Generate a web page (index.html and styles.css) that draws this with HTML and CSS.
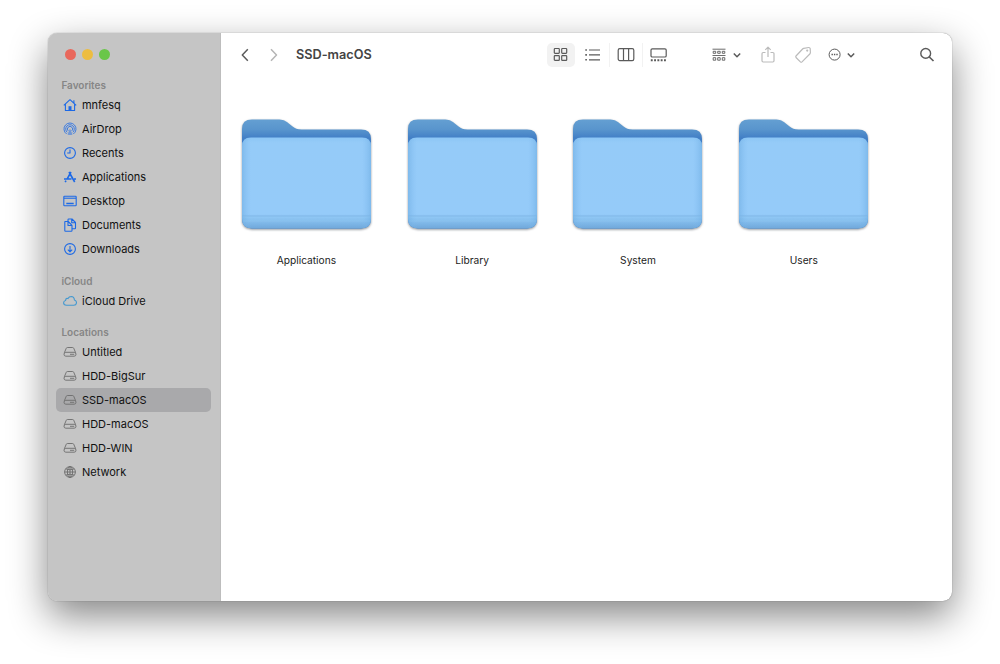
FILE: index.html
```html
<!DOCTYPE html>
<html lang="en">

<head>
  <meta charset="utf-8" />
  <title>SSD-macOS</title>
  <link rel="stylesheet" href="styles.css">
</head>

<body>
  <svg class="defs" width="0" height="0">
    <defs>
      <linearGradient id="folderBack" x1="0" y1="0" x2="0" y2="1">
        <stop offset="0" stop-color="#649fd2" />
        <stop offset="0.09" stop-color="#5995cd" />
        <stop offset="0.17" stop-color="#427fc6" />
        <stop offset="1" stop-color="#427fc6" />
      </linearGradient>
      <linearGradient id="folderFront" x1="0" y1="0" x2="0" y2="1">
        <stop offset="0" stop-color="#8cc6f5" />
        <stop offset="0.06" stop-color="#95cbf8" />
        <stop offset="0.84" stop-color="#95cbf9" />
        <stop offset="0.87" stop-color="#8fc6f4" />
        <stop offset="0.91" stop-color="#87c0ee" />
        <stop offset="0.95" stop-color="#7cb5e6" />
        <stop offset="1" stop-color="#70a8da" />
      </linearGradient>
      <linearGradient id="folderSides" x1="0" y1="0" x2="1" y2="0">
        <stop offset="0" stop-color="#68a8de" stop-opacity="0.5" />
        <stop offset="0.07" stop-color="#7fbaf0" stop-opacity="0" />
        <stop offset="0.93" stop-color="#7fbaf0" stop-opacity="0" />
        <stop offset="1" stop-color="#68a8de" stop-opacity="0.5" />
      </linearGradient>
    </defs>
    <symbol id="folder" viewBox="0 0 130 111" preserveAspectRatio="none">
      <path fill="url(#folderBack)" d="M0 10Q0 .5 10 .5H36C41 .5 43.500 1.500 46.500 4L51 7.500C53.500 9.600 55.500 10.500 60 10.500H120Q130 10.500 130 20V100Q130 110 120 110H10Q0 110 0 100Z" />
      <path fill="url(#folderFront)" d="M0 27.500Q0 18.500 9 18.500H121Q130 18.500 130 27.500V100Q130 110 120 110H10Q0 110 0 100Z" />
      <path fill="url(#folderSides)" d="M0 27.500Q0 18.500 9 18.500H121Q130 18.500 130 27.500V100Q130 110 120 110H10Q0 110 0 100Z" />
      <path fill="none" stroke="#79b2e2" stroke-width=".8" d="M.5 97.500H129.500" />
      <path fill="none" stroke="#a0d1f8" stroke-width=".5" opacity=".5" d="M1 98.300H129M1 102.500H129" />
    </symbol>
    <symbol id="drive" viewBox="0 0 14 14">
      <path d="M1.300 7.800L3.300 3.200Q3.600 2.500 4.400 2.500H9.600Q10.400 2.500 10.700 3.200L12.700 7.800M2.800 7.300H11.200Q13 7.500 13 9.200Q13 11.200 11.200 11.200H2.800Q1 11.200 1 9.200Q1 7.500 2.800 7.300ZM7 9.300H11.200" />
    </symbol>
    <symbol id="down" viewBox="0 0 8 8">
      <path d="M.8 2.500L4 5.700L7.200 2.500" />
    </symbol>
  </svg>

  <div class="window">
    <aside class="sidebar">
      <div class="lights">
        <span class="light red"></span>
        <span class="light yellow"></span>
        <span class="light green"></span>
      </div>

      <h4>Favorites</h4>
      <ul>
        <li>
          <svg class="icon" viewBox="0 0 14 14"><path d="M.8 7.300L7 1.700L13.200 7.300M2.400 6.200V12.500H11.600V6.200M10.900 5V2.300" /><path fill="currentColor" stroke="none" d="M5.500 8.200H8.500V12.500H5.500Z" /></svg>
          mnfesq
        </li>
        <li>
          <svg class="icon thin" viewBox="0 0 14 14"><path d="M3.700 12A6 6 0 1 1 10.300 12M4.200 10.300A4.300 4.300 0 1 1 9.800 10.300M5.200 8.900A2.600 2.600 0 1 1 8.800 8.900" /><path fill="currentColor" stroke="none" d="M7 6.500L9.500 12.500Q7 13.600 4.500 12.500Z" opacity=".5" /></svg>
          AirDrop
        </li>
        <li>
          <svg class="icon" viewBox="0 0 14 14"><circle cx="7" cy="7" r="5.400" /><path d="M7 3.500V7H4.200" /></svg>
          Recents
        </li>
        <li>
          <svg class="icon" viewBox="0 0 14 14"><path stroke-width="1.600" d="M6 2L11.700 12M8 2L4.200 8.800M3 10.700L2.200 12.200M1 9H8.500M11 9H13" /></svg>
          Applications
        </li>
        <li>
          <svg class="icon" viewBox="0 0 14 14"><rect x=".8" y="2.200" width="12.400" height="9.600" rx=".8" /><path d="M1 4.200H13" /><path stroke-width="1.500" d="M3.300 9.500H10.700" /></svg>
          Desktop
        </li>
        <li>
          <svg class="icon" viewBox="0 0 14 14"><path d="M5 3V1.700Q5 1 5.700 1H9L12.500 4.500V10Q12.500 10.700 11.800 10.700H9.300M8.700 1V4.700H12.500M2 3.500H5.200L9 7.300V12.500Q9 13.200 8.300 13.200H2.500Q1.800 13.200 1.800 12.500V4Q1.800 3.500 2 3.500ZM5 3.500V7.500H9" /></svg>
          Documents
        </li>
        <li>
          <svg class="icon" viewBox="0 0 14 14"><circle cx="7" cy="7" r="5.400" /><path d="M7 4V9.700M4.800 7.700L7 9.900L9.200 7.700" /></svg>
          Downloads
        </li>
      </ul>

      <h4>iCloud</h4>
      <ul>
        <li>
          <svg class="icon cloud" viewBox="0 0 14 14"><path d="M3.500 11.300Q.6 11.200 .6 8.800Q.7 6.900 2.600 6.500Q2.500 4.700 4 4.400Q4.600 4.300 5 4.600Q6 2.500 8.200 2.500Q11.200 2.700 11.400 6Q13.500 6.600 13.500 8.700Q13.300 11.200 10.700 11.300Z" /></svg>
          iCloud Drive
        </li>
      </ul>

      <h4>Locations</h4>
      <ul class="locations">
        <li><svg class="icon"><use href="#drive" /></svg>Untitled</li>
        <li><svg class="icon"><use href="#drive" /></svg>HDD-BigSur</li>
        <li class="selected"><svg class="icon"><use href="#drive" /></svg>SSD-macOS</li>
        <li><svg class="icon"><use href="#drive" /></svg>HDD-macOS</li>
        <li><svg class="icon"><use href="#drive" /></svg>HDD-WIN</li>
        <li>
          <svg class="icon thin" viewBox="0 0 14 14"><circle cx="7" cy="7" r="5.400" /><ellipse cx="7" cy="7" rx="2.600" ry="5.400" /><path d="M7 1.600V12.400M1.600 7H12.400M2.700 3.900Q7 5.700 11.300 3.900M2.700 10.100Q7 8.300 11.300 10.100" /></svg>
          Network
        </li>
      </ul>
    </aside>

    <main class="content">
      <header class="toolbar">
        <svg class="back" width="10" height="14" viewBox="0 0 10 14"><path d="M7.800 1.300L2.300 7L7.800 12.700" /></svg>
        <svg class="forward" width="10" height="14" viewBox="0 0 10 14"><path d="M2 1.300L7.500 7L2 12.700" /></svg>
        <h1>SSD-macOS</h1>

        <div class="views">
          <span class="view active">
            <svg width="16" height="16" viewBox="0 0 16 16"><rect x="1.300" y="1.500" width="5" height="4.800" rx=".7" /><rect x="8.700" y="1.500" width="5" height="4.800" rx=".7" /><rect x="1.300" y="8.600" width="5" height="4.800" rx=".7" /><rect x="8.700" y="8.600" width="5" height="4.800" rx=".7" /></svg>
          </span>
          <span class="view">
            <svg width="16" height="16" viewBox="0 0 16 16"><path d="M4 3H15M4 7.900H15M4 12.800H15" /><path stroke-width="1.600" d="M.3 3H1.900M.3 7.900H1.900M.3 12.800H1.900" /></svg>
          </span>
          <span class="view split">
            <svg width="18" height="16" viewBox="0 0 18 16"><rect x="1.200" y="1.600" width="15.600" height="12" rx="1.600" /><path d="M6.500 1.700V13.600M11.600 1.700V13.600" /></svg>
          </span>
          <span class="view split">
            <svg width="18" height="16" viewBox="0 0 18 16"><rect x="1" y="1.800" width="15.200" height="8.200" rx="1.300" /><path stroke-width="2" stroke-dasharray="1.900 1.400" d="M.8 13.200H16.800" /></svg>
          </span>
        </div>

        <svg class="group" width="14" height="14" viewBox="0 0 14 14"><path d="M.5 1.200H13.500M.5 7.500H13.500" stroke-width=".9" /><path stroke-width=".9" d="M1.200 3.300H3.700V5.300H1.200ZM5.700 3.300H8.200V5.300H5.700ZM10.300 3.300H12.800V5.300H10.300ZM1.200 9.700H3.700V12.200H1.200ZM5.700 9.700H8.200V12.200H5.700ZM10.300 9.700H12.800V12.200H10.300Z" /></svg>
        <svg class="arrow" width="8" height="8"><use href="#down" /></svg>
        <svg class="share" width="14" height="18" viewBox="0 0 14 18"><path d="M4.500 6.500H2.200Q1 6.500 1 7.700V14.800Q1 16 2.200 16H11.800Q13 16 13 14.800V7.700Q13 6.500 11.800 6.500H9.500M7 11V1.300M4.300 3.800L7 1.100L9.700 3.800" /></svg>
        <svg class="tag" width="18" height="18" viewBox="0 0 18 18"><path d="M9.700 2.400L14.700 1.500Q16 1.400 16.200 2.700L16.400 6.500Q16.400 7.400 15.800 8L8 15.900Q7.200 16.600 6.400 15.900L2 11.500Q1.400 10.700 2 10L8.600 3Q9 2.600 9.700 2.400Z" /><circle cx="13.200" cy="4.600" r=".5" /></svg>
        <svg class="more" width="14" height="14" viewBox="0 0 14 14"><circle cx="6.600" cy="6.600" r="5.500" /><path stroke-width="1.500" stroke-dasharray="1.400 1" d="M3.500 6.600H10" /></svg>
        <svg class="arrow" width="8" height="8"><use href="#down" /></svg>
        <svg class="search" width="16" height="16" viewBox="0 0 16 16"><circle cx="6.700" cy="6.400" r="4.900" /><path stroke-width="1.700" d="M10.300 10L14.500 14" /></svg>
      </header>

      <div class="files">
        <div class="file"><svg class="folder"><use href="#folder" /></svg><span>Applications</span></div>
        <div class="file"><svg class="folder"><use href="#folder" /></svg><span>Library</span></div>
        <div class="file"><svg class="folder"><use href="#folder" /></svg><span>System</span></div>
        <div class="file"><svg class="folder"><use href="#folder" /></svg><span>Users</span></div>
      </div>
    </main>
  </div>
</body>

</html>
```
FILE: styles.css
```css
* {
  box-sizing: border-box;
}

body {
  margin: 0;
  height: 664px;
  padding: 32.500px 48px 0;
  background: #fff;
  font-family: Inter, "Liberation Sans", sans-serif;
  color: #1c1c1c;
  overflow: hidden;
}

.defs {
  position: absolute;
}

.window {
  display: flex;
  width: 904px;
  height: 568px;
  border-radius: 9px;
  background: #fff;
  box-shadow: 0 0 1px rgba(0, 0, 0, 0.55), 0 15px 38px rgba(0, 0, 0, 0.48);
}

.sidebar {
  width: 173px;
  padding: 16.500px 9px 0 8.400px;
  background: #c5c5c5;
  border-right: 1px solid #bdbdbd;
  border-radius: 9px 0 0 9px;
}

.lights {
  display: flex;
  gap: 6.200px;
  height: 11px;
  padding-left: 8.600px;
}

.light {
  width: 11px;
  height: 11px;
  border-radius: 50%;
}

.red {
  background: #e9685c;
}

.yellow {
  background: #edbd41;
}

.green {
  background: #6ac649;
}

.sidebar h4 {
  margin: 0;
  padding-left: 5px;
  font-size: 10px;
  font-weight: 600;
  line-height: 16px;
  color: #868686;
}

.lights + h4 {
  margin-top: 17.400px;
}

.sidebar ul {
  list-style: none;
  margin: 0 0 11.300px;
  padding: 0;
}

.sidebar li {
  display: flex;
  align-items: center;
  gap: 5px;
  height: 24px;
  padding-left: 6.600px;
  border-radius: 5px;
  font-size: 11px;
  color: #111;
}

.sidebar .selected {
  background: #a9a9ab;
}

svg {
  flex: none;
  fill: none;
  stroke: currentColor;
  stroke-width: 1.2;
  stroke-linecap: butt;
  stroke-linejoin: round;
}

.icon {
  width: 14px;
  height: 14px;
  stroke-width: 1.1;
  color: #1c69e6;
}

.thin {
  stroke-width: 0.8;
}

.cloud {
  color: #4398d0;
}

.locations .icon {
  stroke-width: 0.9;
  color: #6c6c6c;
}

.content {
  flex: 1;
}

.toolbar {
  display: flex;
  align-items: center;
  height: 44px;
  padding: 0 17px 0 19px;
  color: #5a5a5a;
}

.back {
  stroke-width: 1.5;
}

.forward {
  margin-left: 19px;
  stroke-width: 1.5;
  color: #b5b5b5;
}

.toolbar h1 {
  width: 90px;
  margin: 0 0 0 17px;
  font-size: 12.700px;
  font-weight: 600;
  color: #444;
}

.views {
  display: flex;
  margin-left: 161px;
}

.view {
  display: flex;
  align-items: center;
  justify-content: center;
  width: 28px;
  height: 24px;
  border-radius: 5px;
}

.active {
  background: #f2f2f2;
  margin-right: 4px;
}

.split {
  width: 33px;
  border-left: 1px solid #f2f2f2;
  border-radius: 0;
}

.view:nth-child(3) {
  margin-left: 2px;
}

.group {
  margin-left: 37px;
}

.arrow {
  margin-left: 7px;
  stroke-width: 1.5;
}

.share {
  margin-left: 20px;
  color: #bbb;
}

.tag {
  margin-left: 19px;
  color: #bbb;
}

.more {
  margin-left: 16px;
  stroke-width: 1;
}

.more + .arrow {
  margin-left: 5px;
}

.search {
  margin-left: auto;
  stroke-width: 1.4;
}

.files {
  display: grid;
  grid-template-columns: repeat(4, 165.800px);
  padding: 42.700px 0 0 2.500px;
}

.file {
  display: flex;
  flex-direction: column;
  align-items: center;
  gap: 22.800px;
  font-size: 10.200px;
  line-height: 16px;
}

.folder {
  width: 129px;
  height: 110.500px;
  stroke: none;
  filter: drop-shadow(0 1px 1px rgba(40, 50, 60, 0.5));
}
```
